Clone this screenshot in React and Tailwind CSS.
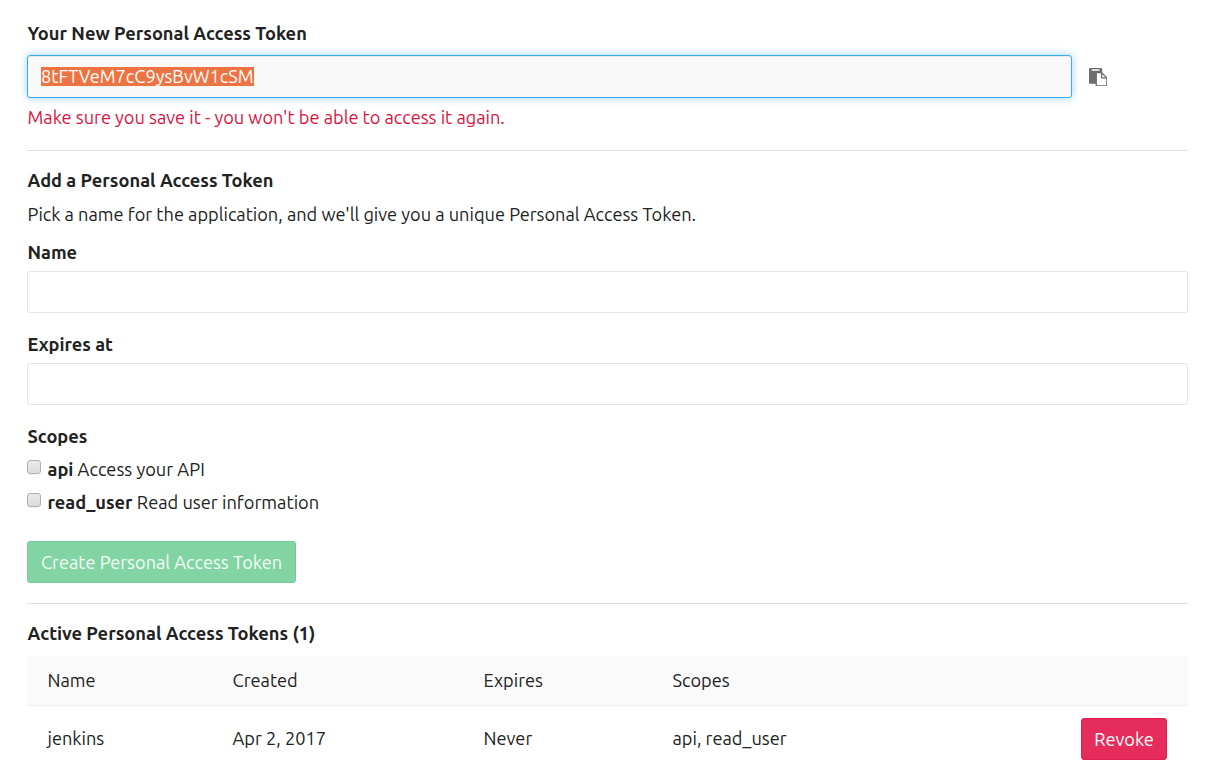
import React from "react";

function PasteIcon() {
  return (
    <svg viewBox="0 0 1792 1792" className="size-[18.5px] fill-[#6e6e6e]" aria-hidden="true">
      <path d="M768 1664h896v-640h-416q-40 0-68-28t-28-68v-416h-384v1152zm256-1440v-64q0-13-9.5-22.5t-22.5-9.5h-704q-13 0-22.5 9.5t-9.5 22.5v64q0 13 9.5 22.5t22.5 9.5h704q13 0 22.5-9.5t9.5-22.5zm256 672h299l-299-299v299zm512 128v672q0 40-28 68t-68 28h-960q-40 0-68-28t-28-68v-160h-544q-40 0-68-28t-28-68v-1344q0-40 28-68t68-28h1088q40 0 68 28t28 68v328q21 13 36 28l408 408q28 28 48 76t20 88z" />
    </svg>
  );
}

function Field({ label }) {
  return (
    <label className="block">
      <span className="block pl-[0.5px] font-bold">{label}</span>
      <input
        type="text"
        className="mt-[7px] block h-[42px] w-full rounded-[3px] border border-[#e5e5e5] bg-white px-[13px] outline-none"
      />
    </label>
  );
}

function Scope({ name, children }) {
  return (
    <label className="flex h-6 items-start">
      <input
        type="checkbox"
        className="mt-[3px] mr-[6.5px] size-[14px] shrink-0 appearance-none rounded-[3px] border border-[#b0b0b0] bg-linear-to-b from-[#e9e9e9] to-[#dcdcdc] shadow-[0_1px_0_rgba(0,0,0,0.05)]"
      />
      <span className="whitespace-nowrap">
        <b>{name}</b> {children}
      </span>
    </label>
  );
}

const columns = "grid grid-cols-[185px_251px_189px_1fr_auto] items-center pl-[20.5px] pr-[21px]";

export default function App() {
  return (
    <main className="h-[775px] w-full overflow-hidden bg-white pr-[38px] pl-[27px] pt-[21px] font-['Ubuntu','Noto_Sans',sans-serif] text-[18.2px] leading-6 text-[#222]">
      <section>
        <h5 className="pl-[0.5px] text-[18.25px] leading-6 font-bold">Your New Personal Access Token</h5>
        <div className="mt-[10px] flex items-center">
          <div className="flex h-[43px] w-[1045px] items-center rounded-[3px] border border-[#3aabf0] bg-[#f9f9f9] pl-[13px] shadow-[inset_0_1px_1px_rgba(0,0,0,0.075),0_0_8px_rgba(58,171,240,0.5)]">
            <span className="h-[19px] bg-[#ed7442] leading-[19px] text-white">8tFTVeM7cC9ysBvW1cSM</span>
          </div>
          <button type="button" aria-label="Copy token" className="ml-[16.5px] pt-px">
            <PasteIcon />
          </button>
        </div>
        <p className="mt-[7px] pl-[0.5px] text-[#d9143f]">
          Make sure you save it - you won't be able to access it again.
        </p>
      </section>

      <hr className="mt-[21px] border-[#dfdfdf]" />

      <section className="pt-[17px]">
        <h5 className="pl-[0.5px] text-[18.25px] leading-6 font-bold">Add a Personal Access Token</h5>
        <p className="mt-[10px] pl-[0.5px] text-[18.22px] leading-6">
          Pick a name for the application, and we'll give you a unique Personal Access Token.
        </p>
        <div className="mt-[14px] flex flex-col gap-[19px]">
          <Field label="Name" />
          <Field label="Expires at" />
        </div>
        <h6 className="mt-[19px] pl-[0.5px] font-bold">Scopes</h6>
        <div className="mt-[9px] flex flex-col gap-[9px] text-[18.25px] leading-6">
          <Scope name="api">Access your API</Scope>
          <Scope name="read_user">Read user information</Scope>
        </div>
        <button
          type="button"
          className="mt-[27px] block h-[42px] w-[269px] rounded-[3px] border border-[#74cb97] bg-[#82d5a3] text-[#f5fcf8]"
        >
          Create Personal Access Token
        </button>
      </section>

      <hr className="mt-5 border-[#dfdfdf]" />

      <section className="pt-[17px]">
        <h5 className="pl-[0.5px] text-[18.3px] leading-6 font-bold">Active Personal Access Tokens (1)</h5>
        <div className="mt-[11px]">
          <div className={`${columns} h-[50px] border-b border-[#eee] bg-[#fafafa] pb-px`}>
            <span>Name</span>
            <span>Created</span>
            <span>Expires</span>
            <span>Scopes</span>
          </div>
          <div className={`${columns} h-[66px]`}>
            <span className="pb-0.5">jenkins</span>
            <span className="pb-0.5">Apr 2, 2017</span>
            <span className="pb-0.5">Never</span>
            <span className="pb-0.5">api, read_user</span>
            <button
              type="button"
              className="h-[42px] w-[86px] rounded-[3px] border border-[#e01f50] bg-[#e52c5a] text-white"
            >
              Revoke
            </button>
          </div>
        </div>
      </section>
    </main>
  );
}
